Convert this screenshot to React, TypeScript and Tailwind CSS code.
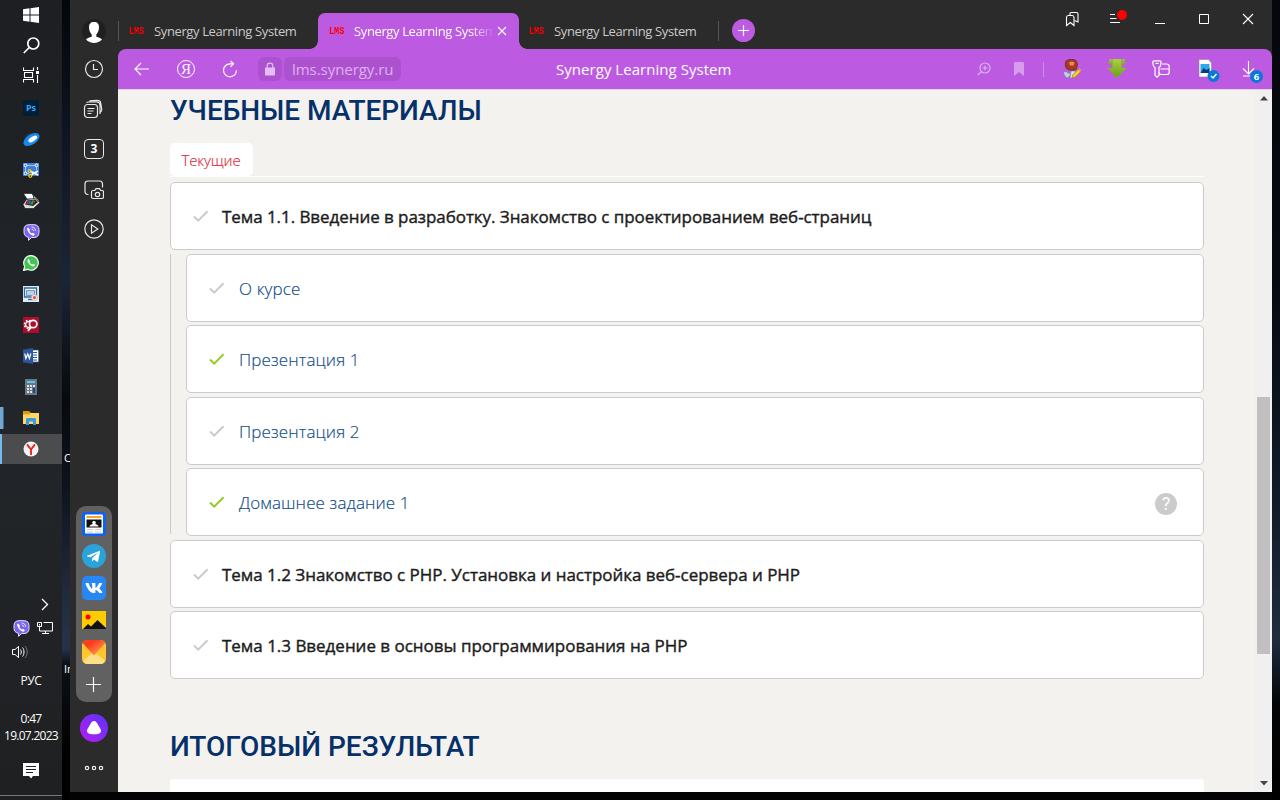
import React from "react";
import { FaTelegramPlane, FaVk } from "react-icons/fa";

type P = { children?: React.ReactNode; className?: string };

function Slot({ children, className = "" }: P) {
  return <div className={`mb-px flex h-[30px] shrink-0 items-center justify-center ${className}`}>{children}</div>;
}

function ViberIcon() {
  return (
    <svg width="17" height="17" viewBox="0 0 17 17">
      <path d="M6 .7h5c3.500 0 5 2 5 5v2.500c0 3.500-1.700 5.300-5 5.300H8.700L5.500 16.300V13.300C2.500 12.700 1 11 1 8.200V5.700c0-3 1.500-5 5-5z" fill="#7c66f0" stroke="#e4defa" />
      <path d="M5 3.500c-1 .5-1 1.500-.6 2.500.9 2.500 2.500 4.500 5 5.500 1.200.4 2 0 2.500-1.200l-2-1.500-1 .7C7.600 8.900 6.700 7.900 6.300 6.700l.8-.9z" fill="#fff" />
      <path d="M8.500 3c2.600 0 4 1.500 4 4M8.700 5c1.200.1 1.800.8 1.900 2" fill="none" stroke="#fff" strokeWidth=".8" />
    </svg>
  );
}

function Taskbar() {
  return (
    <aside className="flex h-[800px] w-[62px] shrink-0 flex-col bg-linear-to-b from-[#1d1f22] via-[#22262a] to-[#1f2022] text-white">
      <div className="flex h-[30px] shrink-0 items-center justify-center">
        <svg width="16" height="16" viewBox="0 0 16 16" fill="#fff"><path d="M0 2.300 6.500 1.300V7.500H0zM7.500 1.200 16 0v7.500H7.500zM0 8.500h6.500v6.200L0 13.700zM7.500 8.500H16V16l-8.500-1.200z" /></svg>
      </div>
      <div className="flex h-[30px] shrink-0 items-center justify-center">
        <svg width="17" height="17" viewBox="0 0 17 17" fill="none" stroke="#fff" strokeWidth="1.700"><circle cx="10.300" cy="6.500" r="5.500" /><path d="M6.300 10.500.8 16" /></svg>
      </div>
      <div className="mb-[3px] flex h-[30px] shrink-0 items-center justify-center">
        <svg width="16" height="16" viewBox="0 0 16 16" fill="none" stroke="#fff" strokeWidth="1.100"><path d="M.5.500V3.500H10.500V.5M.5 15.500v-3H10.500v3M1.500 5.500h8v5h-8zM14.500 0v3M14.500 8v8" /><path d="M13 4h3v3h-3z" fill="#fff" stroke="none" /></svg>
      </div>
      <Slot><div className="flex h-4 w-4 items-center justify-center rounded-[2px] bg-[#001e36] font-['Open_Sans',sans-serif] text-[9px] font-bold text-[#31a8ff]">Ps</div></Slot>
      <Slot>
        <svg width="17" height="14" viewBox="0 0 17 14"><ellipse cx="7" cy="5" rx="6" ry="4" fill="#1c3147" transform="rotate(-20 7 5)" /><ellipse cx="8.500" cy="7.500" rx="9" ry="5" fill="#1689ef" transform="rotate(-33 8.500 7.500)" /><ellipse cx="9.800" cy="7" rx="5" ry="2.300" fill="#fff" transform="rotate(-33 9.800 7)" /></svg>
      </Slot>
      <Slot>
        <svg width="16" height="16" viewBox="0 0 16 16"><path d="M0 1h16v13H0z" fill="#3f7fd9" /><path d="M2.500 3.500h11v4M2.500 3.500v8H6" fill="none" stroke="#fff" strokeDasharray="1 1" /><g fill="#3f7fd9" stroke="#fff"><circle cx="2.500" cy="3.300" r="1.400" /><circle cx="13.500" cy="3.300" r="1.400" /><circle cx="2.500" cy="11.300" r="1.400" /></g><path d="m7 9 8 4M15 9l-7 4" stroke="#fff" strokeWidth="1.700" /><g fill="none" stroke="#f0c419" strokeWidth="1.300"><circle cx="6.500" cy="9" r="1.300" /><circle cx="7.300" cy="13.800" r="1.500" /></g></svg>
      </Slot>
      <Slot>
        <svg width="17" height="16" viewBox="0 0 17 16"><path d="M.5.500H9l3 5.500H4z" fill="#fff" stroke="#111" strokeWidth=".6" /><path d="M11 2.500 16.500 8l-3 1-3-4z" fill="#bbb" stroke="#111" strokeWidth=".6" /><path d="M3.500 6.500 12 5.500l5 4-6.500 6H2l-2-4z" fill="#ddd" stroke="#111" strokeWidth=".6" /><path d="m4 7.500 8-1 3 2.500-5 4-8-1.500z" fill="#222" /><path d="m4.500 8 2-.3-2 3.500-1.500-.3z" fill="#d22" /><path d="m6.500 7.700 2-.2-1.500 4-2-.4z" fill="#26d" /><path d="m9 7.400 2-.2-1.500 4.500-2-.3z" fill="#1b3" /><path d="m11 7.300 1.500 1-2 3z" fill="#d22" /></svg>
      </Slot>
      <Slot><ViberIcon /></Slot>
      <Slot>
        <svg width="16" height="16" viewBox="0 0 16 16"><path d="M8 .6a7.300 7.300 0 1 1-3.500 13.700L.6 15.400l1.100-3.900A7.300 7.300 0 0 1 8 .6z" fill="#43c554" stroke="#fff" strokeWidth="1.200" /><path d="M5.600 4c-1.200.7-1.300 2-.6 3.300 1 1.900 2.500 3.300 4.400 4 1.200.4 2.300-.1 2.600-1.500L10.200 8.700l-1 1C8 9.200 7.100 8.300 6.500 7.200l.7-1z" fill="#fff" /></svg>
      </Slot>
      <Slot>
        <svg width="16" height="16" viewBox="0 0 16 16"><path d="M0 0h16v16H0z" fill="#dcecf5" /><path d="M1.500 2h12v9h-12z" fill="#eef6fa" stroke="#2e6c9b" strokeWidth="1.300" /><path d="M3.500 4.500h8v5h-8z" fill="#b9d3e8" stroke="#7396b5" /><path d="M5 13.500h5" stroke="#2e6c9b" strokeWidth="1.300" /><circle cx="11.500" cy="11.500" r="3" fill="#f7dcd8" stroke="#b9b9c4" strokeWidth=".6" /><circle cx="11.500" cy="11.500" r="1.500" fill="#e8483c" /></svg>
      </Slot>
      <Slot>
        <svg width="16" height="16" viewBox="0 0 16 16"><path d="M0 0h16v16H0z" fill="#b00d2c" /><circle cx="5.500" cy="7.500" r="3.900" fill="none" stroke="#fff" strokeWidth="1.800" strokeDasharray="1.600 1.460" /><circle cx="5.500" cy="7.500" r="2.900" fill="none" stroke="#fff" strokeWidth="1.200" /><circle cx="10.200" cy="7" r="3.700" fill="#b00d2c" stroke="#fff" strokeWidth="1.700" /><path d="m8 10-3 4" stroke="#fff" strokeWidth="1.800" /></svg>
      </Slot>
      <Slot>
        <svg width="16" height="16" viewBox="0 0 16 16"><path d="M8 2h7.700v12H8z" fill="#fff" stroke="#2b579a" strokeWidth=".7" /><path d="M10 4.500h4M10 7h4M10 9.500h4M10 12h4" stroke="#2b579a" /><path d="M0 1.700 10 0v16L0 14.300z" fill="#2b579a" /><path d="m1.700 5.500 1.200 5L4.800 6l1.600 4.500 1.400-5" fill="none" stroke="#fff" strokeWidth="1.200" /></svg>
      </Slot>
      <Slot>
        <svg width="12" height="16" viewBox="0 0 12 16"><path d="M0 0h12v16H0z" fill="#6b7782" /><path d="M2 2h8v2H2z" fill="#4fc9f5" /><path d="M2 6h2v2H2zM5 6h2v2H5zM8 6h2v2H8zM2 9h2v2H2zM5 9h2v2H5zM2 12h2v2H2zM5 12h2v2H5z" fill="#dde3e8" /><path d="M8 9h2v5H8z" fill="#0f4d8c" /></svg>
      </Slot>
      <div className="mb-px flex h-[30px] shrink-0 items-center">
        <div className="flex h-[22px] w-1"><div className="w-[3px] bg-[#6ea6d0]" /><div className="w-px bg-[#416585]" /></div>
        <svg className="ml-[19px]" width="16" height="14" viewBox="0 0 16 14"><path d="M0 0h6l2 2h-8z" fill="#d99b0c" /><path d="M0 2h16v11H0z" fill="#ffd766" /><path d="M0 2h7v1.500H0z" fill="#e5a50a" /><path d="M3 14V8.500C3 7.500 3.500 7 4.500 7h7c1 0 1.500.5 1.500 1.500V14h-3v-3.500H6V14z" fill="#3a9be0" /></svg>
      </div>
      <div className="flex h-[30px] shrink-0 items-center bg-[#4a4c4e]">
        <div className="h-full w-[2px] bg-[#76b9ed]" />
        <svg className="ml-[21px]" width="16" height="16" viewBox="0 0 16 16"><circle cx="8" cy="8" r="7.500" fill="#f5f4f4" /><path d="M4 3.300 8 8.500l4-5.200M8 8v6" fill="none" stroke="#e52620" strokeWidth="1.900" /></svg>
      </div>
      <div className="mt-[132px] ml-[40px] flex h-4 items-center"><svg width="9" height="13" viewBox="0 0 9 13" fill="none" stroke="#fff" strokeWidth="1.300"><path d="m2 1 5.500 5.500L2 12" /></svg></div>
      <div className="mt-[7px] flex h-[18px] items-center gap-[7px] pl-[13px]">
        <ViberIcon />
        <svg width="17" height="14" viewBox="0 0 17 14" fill="none" stroke="#fff"><path d="M6.500 1.500h9v8.500H2.500V6M8.500 10v3M5 12.500h7M.5 1.500h4v4h-4zM2.500 3v1.500" /></svg>
      </div>
      <div className="mt-[7px] ml-[12px] flex h-4 items-center">
        <svg width="17" height="14" viewBox="0 0 17 14" fill="none" stroke="#fff"><path d="M.5 4.500h2.500L6.500 1.500v11L3 9.500H.5z" /><path d="M8.500 4.500c1 1.500 1 3.500 0 5M10.500 2.500c2 2.500 2 6.500 0 9" /><path d="M13 1c3 3.500 3 8.500 0 12" stroke="#777" /></svg>
      </div>
      <div className="mt-[12px] flex flex-col items-center font-['Open_Sans',sans-serif] text-[12px] leading-[17px] whitespace-nowrap">
        <span className="tracking-[-0.4px]">РУС</span>
        <span className="mt-[21px] tracking-[-0.7px]">0:47</span>
        <span className="tracking-[-0.72px]">19.07.2023</span>
      </div>
      <div className="mt-[19px] flex h-4 items-center justify-center">
        <svg width="16" height="16" viewBox="0 0 16 16"><path d="M0 0h16v13h-6l-2 2.500L6 13H0z" fill="#fff" /><path d="M3 3.500h10M3 6.500h10M3 9.500h7" stroke="#202123" strokeWidth="1.200" /></svg>
      </div>
      <div className="mt-[16px] h-px bg-[#77787a]" />
    </aside>
  );
}

function DesktopSliver() {
  return (
    <div className="h-[800px] w-[8px] shrink-0 overflow-hidden bg-[linear-gradient(#03060b_0%,#0a0e16_10%,#0d1420_15%,#1a2535_35%,#07090d_50%,#0e141d_61%,#212c3d_75%,#25334a_81%,#0c1016_83%,#000_95%)] font-['Open_Sans',sans-serif] text-[11px] leading-[14px] text-white">
      <div className="mt-[451px] pl-[2px]">С</div>
      <div className="mt-[197px] pl-[2px]">In</div>
    </div>
  );
}

function SideIcon({ children, className = "" }: P) {
  return <div className={`flex h-10 shrink-0 items-center justify-center ${className}`}>{children}</div>;
}

function Sidebar() {
  return (
    <nav className="flex h-[792px] w-12 shrink-0 flex-col bg-[#2b2b2b] pt-[11px]">
      <SideIcon>
        <svg width="24" height="24" viewBox="0 0 24 24"><circle cx="12" cy="12" r="12" fill="#202020" /><path d="M12 3c3.500 0 5 2 5 5.300 0 3-1.200 5.700-2.700 7.200v2.300c2.200.4 4.500 1.200 5.700 2.700-2 2-5 3.500-8 3.500s-6-1.500-8-3.500c1.200-1.500 3.500-2.300 5.700-2.700v-2.300C8.200 14 7 11.300 7 8.300 7 5 8.500 3 12 3z" fill="#fff" /></svg>
      </SideIcon>
      <SideIcon className="-mt-[2px]"><svg width="20" height="20" viewBox="0 0 20 20" fill="none" stroke="#e8e8e8" strokeWidth="1.200"><circle cx="10" cy="10" r="8.500" /><path d="M9.500 5v5.500H14" /></svg></SideIcon>
      <SideIcon><svg className="-translate-x-px" width="20" height="20" viewBox="0 0 20 20" fill="none" stroke="#e8e8e8" strokeWidth="1.200"><rect x="1.500" y="5.500" width="13" height="13" rx="3" /><path d="M3.500 3.700C4 3.200 4.500 3 5.500 3h8c2.500 0 3.500 1 3.500 3.500V15M6.500 1.800 14 1.300c2.500 0 3.500 1 3.700 2.700L18.700 10c.2 1.500-.5 2.500-1.200 3M4.500 9.500h7M4.500 12h6M4.500 14.500h4" /></svg></SideIcon>
      <SideIcon><div className="flex h-5 w-5 items-center justify-center rounded-[4px] border-[1.500px] border-[#e8e8e8] font-['Open_Sans',sans-serif] text-[12px] font-bold text-white">3</div></SideIcon>
      <SideIcon className="mt-px"><svg width="20" height="20" viewBox="0 0 20 20" fill="none" stroke="#e8e8e8" strokeWidth="1.200"><path d="M4.500 14.500C2 14.500 1 13.500 1 11.500V4C1 2 2 1 4 1h11.500c2 0 3 1 3 3v3.500" /><path d="M9 10.500h1.800L12 8.700h3.500l1.200 1.800H18c1 0 1.500.5 1.500 1.500v5c0 1-.5 1.500-1.500 1.500H9c-1 0-1.500-.5-1.500-1.500v-5c0-1 .5-1.500 1.500-1.500z" /><circle cx="13.500" cy="14.500" r="2.200" /></svg></SideIcon>
      <SideIcon className="-mt-px"><svg width="20" height="20" viewBox="0 0 20 20" fill="none" stroke="#e8e8e8" strokeWidth="1.200"><circle cx="10" cy="10" r="9.200" /><path d="M7.500 5.800v8.400L13.800 10z" /></svg></SideIcon>
      <div className="mx-[6px] mt-[257px] flex h-[196px] shrink-0 flex-col items-center gap-2 rounded-[10px] bg-[#616161] pt-[6px]">
        <svg width="24" height="24" viewBox="0 0 24 24"><rect width="24" height="24" rx="4" fill="#0b62f5" /><rect x="3" y="2.500" width="18" height="19" rx="1" fill="#fff" /><path d="M4.500 4h15v2h-15z" fill="#f5a623" /><path d="M4.500 7.500h15v8h-15z" fill="#111" /><path d="M12 9a1.700 1.700 0 0 1 1.200 3c2 .5 3 1 3.300 2.500h-9c.3-1.500 1.300-2 3.300-2.500A1.700 1.700 0 0 1 12 9z" fill="#fff" /><path d="M5 17.500h6M13 17.500h6M5 20h6M13 20h6" stroke="#ccc" /></svg>
        <div className="flex h-6 w-6 items-center justify-center rounded-full bg-[#29a3dc]"><FaTelegramPlane className="mr-px h-[15px] w-[15px] text-white" /></div>
        <div className="flex h-6 w-6 items-center justify-center rounded-[5px] bg-[#2787f5]"><FaVk className="h-[18px] w-[18px] text-white" /></div>
        <svg width="24" height="24" viewBox="0 0 24 24"><path d="M0 3h24v18H0z" fill="#fc0" /><circle cx="6" cy="9" r="2.500" fill="#f00" /><path d="m1 21 5-5 3 2.500L15.500 12l8.500 8v1z" fill="#111" /></svg>
        <svg width="24" height="24" viewBox="0 0 24 24"><defs><linearGradient id="mail" x1="0" y1="0" x2="1" y2="1"><stop offset=".3" stopColor="#ff3c1f" /><stop offset=".75" stopColor="#ff8a4a" /></linearGradient></defs><rect width="24" height="24" rx="5.500" fill="#ffc42e" /><path d="M1 20.500 12 12l11 8.500C22.500 22.500 21 24 18.500 24h-13C3 24 1.500 22.500 1 20.500z" fill="#ffdf85" /><path d="M5.500 0h13C21 0 22.500 1 23.300 3L12 15.500.7 3C1.500 1 3 0 5.500 0z" fill="url(#mail)" /></svg>
        <svg width="24" height="24" viewBox="0 0 24 24" stroke="#fff" strokeWidth="1.200"><path d="M11.500 5v15M4 12.500h15" /></svg>
      </div>
      <div className="mt-3 flex h-7 shrink-0 justify-center">
        <svg width="28" height="28" viewBox="0 0 28 28"><defs><linearGradient id="alice" x1="1" y1="0" x2="0" y2="1"><stop stopColor="#5a35f5" /><stop offset="1" stopColor="#b71bf5" /></linearGradient></defs><circle cx="14" cy="14" r="14" fill="url(#alice)" /><path d="M14 7c1.500 0 2.200.8 3 2l3.500 6c1.700 3-.3 5.300-6.500 5.300S5.800 18 7.500 15L11 9c.8-1.200 1.500-2 3-2z" fill="#fff" /></svg>
      </div>
      <div className="mt-[22px] flex h-8 justify-center"><svg width="20" height="8" viewBox="0 0 20 8" fill="none" stroke="#eee" strokeWidth="1.200"><circle cx="3" cy="4" r="1.700" /><circle cx="10" cy="4" r="1.700" /><circle cx="17" cy="4" r="1.700" /></svg></div>
    </nav>
  );
}

function LmsMark() {
  return <span className="inline-block w-4 origin-left scale-x-[0.77] font-['Liberation_Mono',monospace] text-[11px] leading-none font-bold text-[#f00]">LMS</span>;
}

function TabStrip() {
  return (
    <div className="flex h-[49px] shrink-0 items-end bg-[#2b2b2b] font-['Open_Sans',sans-serif] text-[13px] text-[#c9c9c9]">
      <div className="flex h-9 w-[200px] shrink-0 items-center">
        <div className="h-5 w-px bg-[#555]" />
        <div className="ml-[10px] flex"><LmsMark /></div>
        <span className="mt-px ml-[9px] tracking-[-0.38px] whitespace-nowrap">Synergy Learning System</span>
      </div>
      <div className="relative flex h-9 w-[201px] shrink-0 items-center rounded-t-[7px] bg-[#bc5be1] text-white">
        <div className="absolute bottom-0 -left-2 h-2 w-2 bg-[radial-gradient(circle_at_0_0,transparent_7.5px,#bc5be1_8px)]" />
        <div className="absolute -right-2 bottom-0 h-2 w-2 bg-[radial-gradient(circle_at_100%_0,transparent_7.5px,#bc5be1_8px)]" />
        <div className="ml-[11px] flex"><LmsMark /></div>
        <span className="mt-px ml-[9px] w-[139px] overflow-hidden mask-[linear-gradient(to_right,#000_116px,transparent_141px)] tracking-[-0.38px] whitespace-nowrap">Synergy Learning System</span>
        <svg className="ml-[4px]" width="10" height="10" viewBox="0 0 10 10" stroke="#fff" strokeWidth="1.100"><path d="m1 1 8 8M9 1 1 9" /></svg>
      </div>
      <div className="flex h-9 w-[199px] shrink-0 items-center">
        <div className="ml-[10px] flex"><LmsMark /></div>
        <span className="mt-px ml-[9px] tracking-[-0.38px] whitespace-nowrap">Synergy Learning System</span>
      </div>
      <div className="flex h-9 items-center">
        <div className="h-5 w-px bg-[#555]" />
        <svg className="mb-px ml-[13px]" width="23" height="23" viewBox="0 0 23 23"><circle cx="11.500" cy="11.500" r="11.500" fill="#bc5be1" /><path d="M11.500 6v11M6 11.500h11" stroke="#fff" strokeWidth="1.200" /></svg>
      </div>
      <div className="mb-[18px] ml-auto flex h-6 items-center pr-[18px]">
        <svg width="14" height="16" viewBox="0 0 14 16" fill="none" stroke="#fff" strokeWidth="1.100"><path d="M1.500 14.500V6.500c0-1.300.5-2 1.800-2h4c1.300 0 1.700.7 1.700 2v8L5.300 11.500z" /><path d="M5 4V2.500c0-.7.5-1 1-1h5.500c1 0 1.500.5 1.500 1.500v8L9.500 9.500" /></svg>
        <svg className="ml-[31px] overflow-visible" width="18" height="16" viewBox="0 0 18 16"><path d="M0 3.500h5M0 7.500h6.500M0 11.500h10" stroke="#fff" strokeWidth="1" /><circle cx="12" cy="4" r="5" fill="#f00" /></svg>
        <svg className="ml-[27px]" width="10" height="16" viewBox="0 0 10 16"><path d="M0 12.500h10" stroke="#fff" /></svg>
        <svg className="ml-[34px]" width="10" height="10" viewBox="0 0 10 10"><path d="M.5.500h9v9h-9z" fill="none" stroke="#fff" /></svg>
        <svg className="ml-[33px]" width="12" height="12" viewBox="0 0 12 12"><path d="m1 1 10 10M11 1 1 11" stroke="#fff" strokeWidth="1.100" /></svg>
      </div>
    </div>
  );
}

function Toolbar() {
  return (
    <div className="bg-[#2b2b2b]">
      <div className="flex h-10 items-center rounded-t-[8px] bg-[#bc5be1] pl-[16px] font-['Open_Sans',sans-serif] text-[15px] whitespace-nowrap">
        <svg width="16" height="14" viewBox="0 0 16 14" fill="none" stroke="#fff" strokeWidth="1.100"><path d="M15 7H1M7 1 1 7l6 6" /></svg>
        <div className="ml-[27px] flex h-[18px] w-[18px] items-center justify-center rounded-full border border-white font-['Liberation_Serif',serif] text-[15px] leading-none text-white">Я</div>
        <svg className="ml-[27px]" width="17" height="18" viewBox="0 0 17 18" fill="none" stroke="#fff" strokeWidth="1.200"><path d="M11.500 3.800H8a6.500 6.500 0 1 0 6.500 6.500M8.500.8l3 3-3 3" /></svg>
        <div className="ml-[19px] flex h-6 w-6 items-center justify-center rounded-[6px] bg-[#ad52ce]">
          <svg width="10" height="14" viewBox="0 0 10 14"><path d="M0 5.500h10v7c0 .7-.5 1-1 1H1c-.5 0-1-.3-1-1z" fill="#e3bdf3" /><path d="M2.200 6V3.500c0-3.300 5.600-3.300 5.600 0V6" fill="none" stroke="#e3bdf3" strokeWidth="1.200" /></svg>
        </div>
        <div className="ml-[2px] flex h-6 w-[117px] items-center rounded-[6px] bg-[#ad52ce] pl-2 text-[#deb0ef]"><span className="mt-px tracking-[-0.05px]">lms.synergy.ru</span></div>
        <div className="ml-[155px] w-[180px] tracking-[0.04px] text-white">Synergy Learning System</div>
        <svg className="ml-[241px]" width="14" height="14" viewBox="0 0 14 14" fill="none" stroke="#deb0ef" strokeWidth="1.200"><circle cx="8" cy="6" r="5" /><path d="M4.300 9.700.8 13M8 3.500v5M5.500 6h5" /></svg>
        <svg className="ml-[23px]" width="10" height="14" viewBox="0 0 10 14" fill="#d79dec"><path d="M0 1.500C0 .5.500 0 1.500 0h7c1 0 1.500.5 1.500 1.500V14l-5-4-5 4z" /></svg>
        <div className="ml-[19px] h-[15px] w-px bg-[#d08ee9]" />
        <svg className="ml-[19px]" width="19" height="20" viewBox="0 0 19 20"><path d="M.5 13.500c1-1.500 3-1 4 0L8 15l-3 4c-2 0-4-2-4.500-5.500z" fill="#b9d2e3" stroke="#668" strokeWidth=".5" /><path d="M8 12h4.500l-1 7H7z" fill="#d5e4ee" stroke="#778" strokeWidth=".5" /><path d="M3.500 1.500C6 0 11 0 13 1.500c2 2.500 1.500 6 0 9-2.500 1.300-6 1-9-.5C2.200 8 1.500 4 3.500 1.500z" fill="#a83a22" stroke="#64200f" strokeWidth=".7" /><path d="M6 3.500c1.700-1.300 4-1 5.500 0l-1 3H7z" fill="#df8d6c" /><path d="m9 19 1-3.500 5.500-5.500L18 12.500 12.300 18z" fill="#f3d22b" stroke="#8a6914" strokeWidth=".6" /><path d="m15.500 10 1-1 2 2.300-1 1.200z" fill="#e98a8a" /></svg>
        <svg className="ml-[25px]" width="20" height="20" viewBox="0 0 20 20"><defs><linearGradient id="arrow" x1="0" y1="0" x2="0" y2="1"><stop stopColor="#add33b" /><stop offset="1" stopColor="#669f17" /></linearGradient></defs><g fill="url(#arrow)" stroke="#93b535" strokeWidth=".3"><path d="M2.500 0H4.500V3.500H6L3.500 6.500 .8 3.500H2.500z" /><path d="M15.500 0h2v3.500h1.700L16.500 6.500 14 3.500h1.500z" /><path d="M5.500 0h9v9H19.500L10 19 .5 9h5z" /></g></svg>
        <svg className="ml-[25px]" width="18" height="18" viewBox="0 0 18 18" fill="none" stroke="#fff" strokeWidth="1.200"><path d="M2.500.8h5c1.200 0 1.800.7 1.500 2L8.300 6c-.2.8-.6 1-1.300 1.300v8L5 17.200l-2-1.900V7.500C2 7 1.600 6.500 1.400 5.500L.8 2.800C.6 1.500 1.200.8 2.500.8zM3.500 3.300h3" /><path d="M10 4h4.500c1.800 0 2.700 1 2.700 2.700v5.500c0 1.500-.8 2.300-2.300 2.300H9.500c-1.500 0-2.300-.8-2.300-2M8.500 9h8.500" /></svg>
        <svg className="mt-[4px] ml-[28px]" width="22" height="24" viewBox="0 0 22 24"><path d="M1 .5h9.500L13.500 4v14H1z" fill="#fff" stroke="#888" strokeWidth=".6" /><path d="M2.500 5h9v9h-9z" fill="#2da9e9" /><path d="m2.500 14 3-5 3 2 3-2v5z" fill="#0a3e73" /><circle cx="15.500" cy="17" r="6" fill="#0a78d7" /><path d="m13 17 2 2 3.500-4" fill="none" stroke="#fff" strokeWidth="1.400" /></svg>
        <div className="relative ml-[22px] h-[20px] w-[20px]">
          <svg width="20" height="20" viewBox="0 0 20 20" fill="none" stroke="#fff" strokeWidth="1.100"><path d="M6.500 2v13M1 9.500l5.500 5.500L12 9.500M1 17h8" /></svg>
          <div className="absolute top-[11px] left-[8px] flex h-[13px] w-[13px] items-center justify-center rounded-full bg-[#0a78d7] text-[9.500px] leading-none font-bold text-white">6</div>
        </div>
      </div>
    </div>
  );
}

function Check({ done = false }: { done?: boolean }) {
  return <svg className={done ? "text-[#93cd24]" : "text-[#cacaca]"} width="16" height="14" viewBox="0 0 16 14" fill="none" stroke="currentColor" strokeWidth="2"><path d="m1 7.500 4.200 4.200L14.500 2.200" /></svg>;
}

function Topic({ title, textClass, className = "" }: { title: string; textClass: string; className?: string }) {
  return (
    <div className={`flex h-[68px] shrink-0 items-center rounded-[5px] border border-[#cbcbcd] bg-white pl-[22px] ${className}`}>
      <Check />
      <span className={`mt-px ml-[13px] font-['Open_Sans',sans-serif] text-[17px] font-normal whitespace-nowrap text-[#1c1c1c] [-webkit-text-stroke:0.4px_#1c1c1c] ${textClass}`}>{title}</span>
    </div>
  );
}

function Lesson({ title, done, help, className = "" }: { title: string; done?: boolean; help?: boolean; className?: string }) {
  return (
    <div className={`flex h-[68px] shrink-0 items-center rounded-[5px] border border-[#cbcbcd] bg-white pr-[26px] pl-[22px] ${className}`}>
      <Check done={done} />
      <span className="mt-px ml-[14px] font-['Open_Sans',sans-serif] text-[17px] font-light tracking-[0.12px] whitespace-nowrap text-[#0c4a86] [-webkit-text-stroke:0.15px_#0c4a86]">{title}</span>
      {help && <div className="mt-[3px] ml-auto flex h-[22px] w-[22px] items-center justify-center rounded-full bg-[#cbcbcb] font-['Roboto',sans-serif] text-[18px] leading-none font-normal text-white">?</div>}
    </div>
  );
}

function Heading({ children, className = "" }: P) {
  return <h2 className={`font-['Roboto',sans-serif] text-[28px] leading-[34px] font-medium whitespace-nowrap text-[#05306a] ${className}`}>{children}</h2>;
}

function Page() {
  return (
    <main className="flex h-[703px] overflow-hidden border-t border-[#ddd5e0] bg-[#f3f2ee]">
      <div className="ml-[52px] flex w-[1034px] flex-col">
        <Heading className="mt-[4px] tracking-[-0.04px]">УЧЕБНЫЕ МАТЕРИАЛЫ</Heading>
        <div className="mt-[15px] flex h-[34px] shrink-0 border-b border-white">
          <div className="flex w-[83px] items-center justify-center rounded-[5px] bg-white pr-px font-['Open_Sans',sans-serif] text-[15px] font-light tracking-[-0.15px] text-[#e2263c] [-webkit-text-stroke:0.15px_#e2263c]"><span className="mt-[2px]">Текущие</span></div>
        </div>
        <Topic className="mt-[5px]" textClass="tracking-[-0.06px]" title="Тема 1.1. Введение в разработку. Знакомство с проектированием веб-страниц" />
        <div className="mt-1 flex h-[282px] shrink-0">
          <div className="h-[280px] w-px bg-[#cbcbcd]" />
          <div className="ml-[15px] flex flex-1 flex-col">
            <Lesson title="О курсе" />
            <Lesson className="mt-[3px]" title="Презентация 1" done />
            <Lesson className="mt-1" title="Презентация 2" />
            <Lesson className="mt-[3px]" title="Домашнее задание 1" done help />
          </div>
        </div>
        <Topic className="mt-1" textClass="tracking-[-0.03px]" title="Тема 1.2 Знакомство с PHP. Установка и настройка веб-сервера и PHP" />
        <Topic className="mt-[3px]" textClass="tracking-[-0.02px]" title="Тема 1.3 Введение в основы программирования на PHP" />
        <Heading className="mt-[51px]">ИТОГОВЫЙ РЕЗУЛЬТАТ</Heading>
        <div className="mt-[15px] h-5 shrink-0 rounded-t-[3px] bg-white" />
      </div>
      <div className="ml-auto flex w-[17px] flex-col items-center bg-[#f0f0f1]">
        <svg className="mt-[6px]" width="8" height="5" viewBox="0 0 8 5" fill="#454545"><path d="M4 0l4 4.500H0z" /></svg>
        <div className="mt-[296px] h-[257px] w-[13px] bg-[#c0c0c0]" />
        <svg className="mt-[127px]" width="8" height="5" viewBox="0 0 8 5" fill="#454545"><path d="M4 4.500 0 0h8z" /></svg>
      </div>
    </main>
  );
}

export default function App() {
  return (
    <div className="flex h-[800px] w-[1280px] overflow-hidden bg-[linear-gradient(#05070c_0%,#070a11_35%,#111a26_62%,#202c3e_80%,#030406_88%,#000_100%)]">
      <Taskbar />
      <DesktopSliver />
      <div className="flex h-[800px] w-[1202px] shrink-0 flex-col bg-[#030304]">
        <div className="flex h-[792px]">
          <Sidebar />
          <div className="flex w-[1154px] flex-col">
            <TabStrip />
            <Toolbar />
            <Page />
          </div>
        </div>
      </div>
    </div>
  );
}
